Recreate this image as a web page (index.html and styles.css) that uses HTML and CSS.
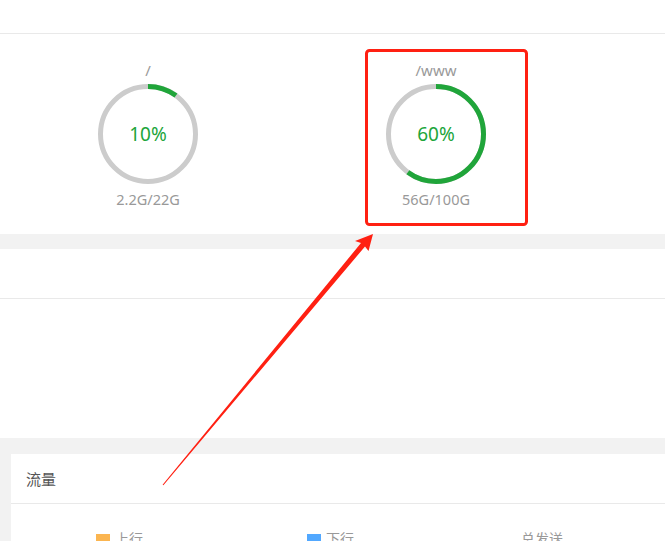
FILE: index.html
```html
<!DOCTYPE html>
<html lang="zh-CN">
<head>
<meta charset="utf-8">
<title>磁盘</title>
<link rel="stylesheet" href="styles.css">
</head>
<body>
<div class="page">
  <section class="panel panel-disk">
    <div class="panel-head"></div>
    <div class="disk-list">
      <div class="disk">
        <div class="disk-path">/</div>
        <div class="gauge">
          <svg class="gauge-svg" width="100" height="100" viewBox="0 0 100 100">
            <circle class="gauge-track" cx="50" cy="50" r="47.5"></circle>
            <circle class="gauge-bar" cx="50" cy="50" r="47.5" stroke-dasharray="29.85 298.45"></circle>
          </svg>
          <span class="gauge-value">10%</span>
        </div>
        <div class="disk-size">2.2G/22G</div>
      </div>
      <div class="disk">
        <div class="disk-path">/www</div>
        <div class="gauge">
          <svg class="gauge-svg" width="100" height="100" viewBox="0 0 100 100">
            <circle class="gauge-track" cx="50" cy="50" r="47.5"></circle>
            <circle class="gauge-bar" cx="50" cy="50" r="47.5" stroke-dasharray="179.07 298.45"></circle>
          </svg>
          <span class="gauge-value">60%</span>
        </div>
        <div class="disk-size">56G/100G</div>
      </div>
    </div>
  </section>

  <section class="panel panel-mid">
    <div class="panel-head panel-head-tall"></div>
    <div class="panel-body-mid"></div>
  </section>

  <div class="card-wrap">
    <section class="card">
      <div class="card-head">流量</div>
      <div class="legend">
        <div class="legend-item legend-up"><i class="swatch swatch-orange"></i>上行</div>
        <div class="legend-item legend-down"><i class="swatch swatch-blue"></i>下行</div>
        <div class="legend-item legend-total">总发送</div>
      </div>
    </section>
  </div>

  <svg class="annot" width="665" height="541" viewBox="0 0 665 541">
    <rect class="annot-box" x="366.5" y="50.5" width="160" height="174" rx="3" ry="3"></rect>
    <polygon class="annot-arrow" points="373,234 355,241 361,243 162.6,484.7 163.4,485.3 365,246.5 368.5,251"></polygon>
  </svg>
</div>
</body>
</html>
```

FILE: styles.css
```css
html, body {
  margin: 0;
  padding: 0;
}
body {
  width: 665px;
  height: 541px;
  overflow: hidden;
  background: #f2f2f2;
  font-family: "Noto Sans", "Noto Sans CJK SC", sans-serif;
}
.page {
  position: relative;
  width: 665px;
  height: 541px;
  overflow: hidden;
}
.panel {
  background: #fff;
}
.panel-head {
  height: 33px;
  border-bottom: 1px solid #e9e9e9;
}
.panel-head-tall {
  height: 49px;
}
.disk-list {
  display: flex;
  padding: 26px 0 25px 4px;
  overflow: hidden;
}
.disk {
  flex: 0 0 288px;
  display: flex;
  flex-direction: column;
  align-items: center;
}
.disk-path,
.disk-size {
  height: 20px;
  line-height: 20px;
  font-size: 14.5px;
  color: #999;
}
.disk-path {
  font-size: 15px;
}
.gauge {
  position: relative;
  width: 100px;
  height: 100px;
  margin-top: 4px;
}
.gauge-svg {
  display: block;
  transform: rotate(-90deg);
}
.gauge-track {
  fill: none;
  stroke: #cccccc;
  stroke-width: 5;
}
.gauge-bar {
  fill: none;
  stroke: #20a53a;
  stroke-width: 5;
}
.gauge-value {
  position: absolute;
  inset: 0;
  display: flex;
  align-items: center;
  justify-content: center;
  font-size: 19px;
  color: #20a53a;
}
.disk-size {
  margin-top: 5px;
}
.panel-mid {
  margin-top: 15px;
}
.panel-body-mid {
  height: 139px;
}
.card-wrap {
  padding: 16px 0 0 11px;
}
.card {
  background: #fff;
  height: 200px;
}
.card-head {
  height: 49px;
  line-height: 50px;
  border-bottom: 1px solid #e9e9e9;
  padding-left: 15px;
  font-size: 15px;
  color: #555;
}
.legend {
  display: flex;
  padding: 26px 0 0 85px;
  font-size: 14px;
  color: #999;
  line-height: 18px;
}
.legend-item {
  display: flex;
  align-items: flex-start;
}
.legend-up { width: 211px; }
.legend-down { width: 214px; }
.swatch {
  display: inline-block;
  width: 14px;
  height: 10px;
  margin: 4px 5px 0 0;
}
.swatch-orange { background: #fbb550; }
.swatch-blue { background: #52a8ff; }
.annot {
  position: absolute;
  left: 0;
  top: 0;
  pointer-events: none;
}
.annot-box {
  fill: none;
  stroke: #ff2012;
  stroke-width: 3;
}
.annot-arrow {
  fill: #ff2012;
}
```
